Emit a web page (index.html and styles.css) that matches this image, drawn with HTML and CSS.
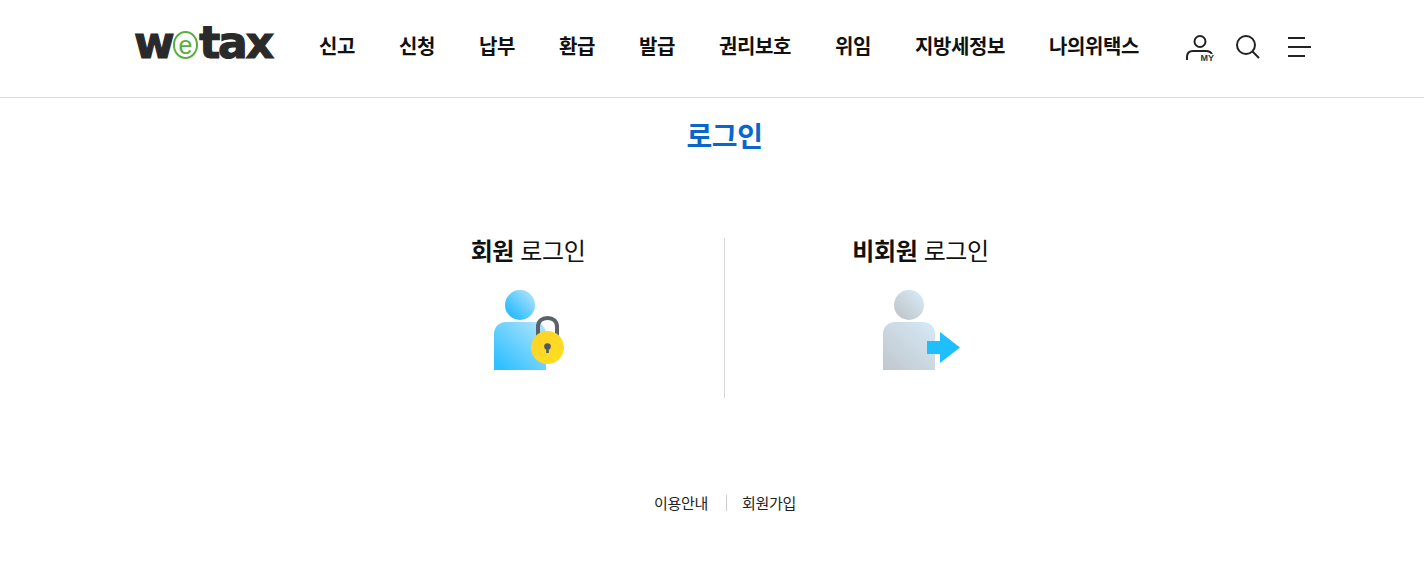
FILE: index.html
```html
<!DOCTYPE html>
<html lang="ko">
<head>
  <meta charset="UTF-8">
  <meta name="viewport" content="width=device-width, initial-scale=1.0">
  <title>위택스 로그인</title>
  <link rel="stylesheet" href="styles.css">
</head>
<body>

  <header class="header">
    <a class="logo" href="#">w<span class="logo-e">e</span>tax</a>

    <nav class="gnb">
      <a href="#">신고</a>
      <a href="#">신청</a>
      <a href="#">납부</a>
      <a href="#">환급</a>
      <a href="#">발급</a>
      <a href="#">권리보호</a>
      <a href="#">위임</a>
      <a href="#">지방세정보</a>
      <a href="#">나의위택스</a>
    </nav>

    <div class="util">
      <a class="util-my" href="#">
        <svg width="28" height="28" viewBox="0 0 28 28" fill="none" stroke="#222" stroke-width="2">
          <circle cx="14" cy="7.500" r="5.500"/>
          <path d="M1 26v-3c0-4 2.500-6 6-6h13c2.500 0 5 1 6 3.500"/>
        </svg>
        <span class="my-label">MY</span>
      </a>
      <a class="util-search" href="#">
        <svg width="24" height="24" viewBox="0 0 24 24" fill="none" stroke="#222" stroke-width="2">
          <circle cx="10" cy="10" r="9"/>
          <path d="M16.500 16.500l6.500 6.500"/>
        </svg>
      </a>
      <a class="util-menu" href="#">
        <span class="bar short"></span>
        <span class="bar"></span>
        <span class="bar short"></span>
      </a>
    </div>
  </header>

  <main class="content">
    <h1 class="page-title">로그인</h1>

    <div class="login-box">
      <a class="login-col" href="#">
        <h2><b>회원</b> 로그인</h2>
        <svg class="login-icon" width="81" height="82" viewBox="0 0 81 82">
          <defs>
            <linearGradient id="blueHead" x1="0" y1="1" x2="1" y2="0">
              <stop offset="0.200" stop-color="#2ebdff"/>
              <stop offset="1" stop-color="#bde8fd"/>
            </linearGradient>
            <linearGradient id="blueBody" x1="0" y1="1" x2="1" y2="0">
              <stop offset="0.100" stop-color="#30c0ff"/>
              <stop offset="1" stop-color="#b5e6fd"/>
            </linearGradient>
            <linearGradient id="yellow" x1="0" y1="0" x2="1" y2="1">
              <stop offset="0" stop-color="#fcd22a"/>
              <stop offset="1" stop-color="#ffdf20"/>
            </linearGradient>
          </defs>
          <circle cx="32" cy="17" r="15" fill="url(#blueHead)"/>
          <path d="M6 82V46c0-7 5-12 12-12h28c7 0 12 5 12 12v36z" fill="url(#blueBody)"/>
          <path d="M50 50V39c0-6 4-9 9.500-9s9.500 3 9.500 9v11" fill="none" stroke="#5a6268" stroke-width="4"/>
          <circle cx="59.500" cy="59.500" r="16.500" fill="url(#yellow)"/>
          <circle cx="59.500" cy="58.500" r="3.300" fill="#4f5a64"/>
          <rect x="58.200" y="59" width="2.600" height="6" fill="#4f5a64"/>
        </svg>
      </a>
      <a class="login-col" href="#">
        <h2><b>비회원</b> 로그인</h2>
        <svg class="login-icon" width="81" height="82" viewBox="0 0 81 82">
          <defs>
            <linearGradient id="grayHead" x1="0" y1="1" x2="1" y2="0">
              <stop offset="0.100" stop-color="#bfc5ca"/>
              <stop offset="1" stop-color="#d9edf9"/>
            </linearGradient>
            <linearGradient id="grayBody" x1="0" y1="1" x2="1" y2="0">
              <stop offset="0" stop-color="#c1c7cc"/>
              <stop offset="1" stop-color="#d5eaf7"/>
            </linearGradient>
          </defs>
          <circle cx="29" cy="17" r="15" fill="url(#grayHead)"/>
          <path d="M3 82V46c0-7 5-12 12-12h28c7 0 12 5 12 12v36z" fill="url(#grayBody)"/>
          <path d="M47 53h13V44l20 15.500L60 75v-9H47z" fill="#1fbfff"/>
        </svg>
      </a>
    </div>

    <ul class="login-links">
      <li><a href="#">이용안내</a></li>
      <li><a href="#">회원가입</a></li>
    </ul>
  </main>

</body>
</html>
```

FILE: styles.css
```css
* {
  margin: 0;
  padding: 0;
  box-sizing: border-box;
}

body {
  background-color: #fff;
  color: #111;
  font-family: "Noto Sans CJK KR", "Noto Sans", sans-serif;
}

a {
  color: inherit;
  text-decoration: none;
}

/* Header */
.header {
  display: flex;
  align-items: center;
  height: 98px;
  padding: 0 0 4px 135px;
  border-bottom: 1px solid #dcdcdc;
}

.logo {
  display: flex;
  align-items: center;
  width: 138px;
  margin: 0 1px 7px -1px;
  font-family: "DejaVu Sans", sans-serif;
  font-weight: 700;
  font-size: 44px;
  line-height: 1;
  letter-spacing: -2.100px;
  color: #2a2a2a;
  -webkit-text-stroke: 1.200px #2a2a2a;
}

.logo-e {
  display: flex;
  align-items: center;
  justify-content: center;
  width: 28px;
  height: 28px;
  margin: 4px 1px 0 0;
  border: 2px solid #58ad3f;
  border-radius: 50%;
  font-family: "Liberation Sans", sans-serif;
  font-weight: 400;
  font-size: 25px;
  letter-spacing: 0;
  color: #58ad3f;
  -webkit-text-stroke: 0;
}

.gnb {
  display: flex;
  gap: 44px;
  margin-left: 46px;
  margin-bottom: 2px;
  font-size: 20px;
  font-weight: 700;
  letter-spacing: -0.400px;
  line-height: 26px;
  color: #111;
}

/* Utility icons */
.util {
  display: flex;
  align-items: center;
  margin-left: 47px;
}

.util-my {
  position: relative;
  display: block;
  width: 28px;
  height: 28px;
  margin-top: 2px;
}

.my-label {
  position: absolute;
  right: 0;
  bottom: -1px;
  padding-left: 2px;
  background: #fff;
  font-family: "Liberation Sans", sans-serif;
  font-size: 9px;
  font-weight: 700;
  line-height: 9px;
  color: #333;
}

.util-search {
  display: block;
  height: 24px;
  margin-left: 22px;
  margin-top: 1px;
}

.util-menu {
  display: flex;
  flex-direction: column;
  gap: 7px;
  width: 23px;
  margin-left: 28px;
}

.bar {
  display: block;
  height: 2px;
  background: #222;
}

.bar.short {
  width: 17px;
}

/* Content */
.content {
  padding-left: 24px;
}

.page-title {
  margin-top: 17px;
  padding-left: 1px;
  text-align: center;
  font-size: 28px;
  font-weight: 700;
  letter-spacing: -0.500px;
  line-height: 40px;
  color: #0a66cc;
}

.login-box {
  display: grid;
  grid-template-columns: 392px 392px;
  justify-content: center;
  height: 160px;
  margin-top: 83px;
}

.login-col {
  display: flex;
  flex-direction: column;
  align-items: center;
}

.login-col + .login-col {
  border-left: 1px solid #d8d8d8;
}

.login-col h2 {
  margin-top: -1px;
  font-size: 24px;
  font-weight: 400;
  letter-spacing: -0.400px;
  line-height: 26px;
}

.login-col b {
  font-weight: 700;
}

.login-icon {
  margin-top: 25px;
}

.login-links {
  display: flex;
  justify-content: center;
  align-items: center;
  margin-top: 93px;
  padding-left: 2px;
  list-style: none;
  font-size: 15px;
  letter-spacing: -0.300px;
  line-height: 24px;
  color: #222;
}

.login-links li + li {
  margin-left: 18px;
  padding-left: 16px;
  background: linear-gradient(#ccc, #ccc) left center / 1px 16px no-repeat;
}
```
